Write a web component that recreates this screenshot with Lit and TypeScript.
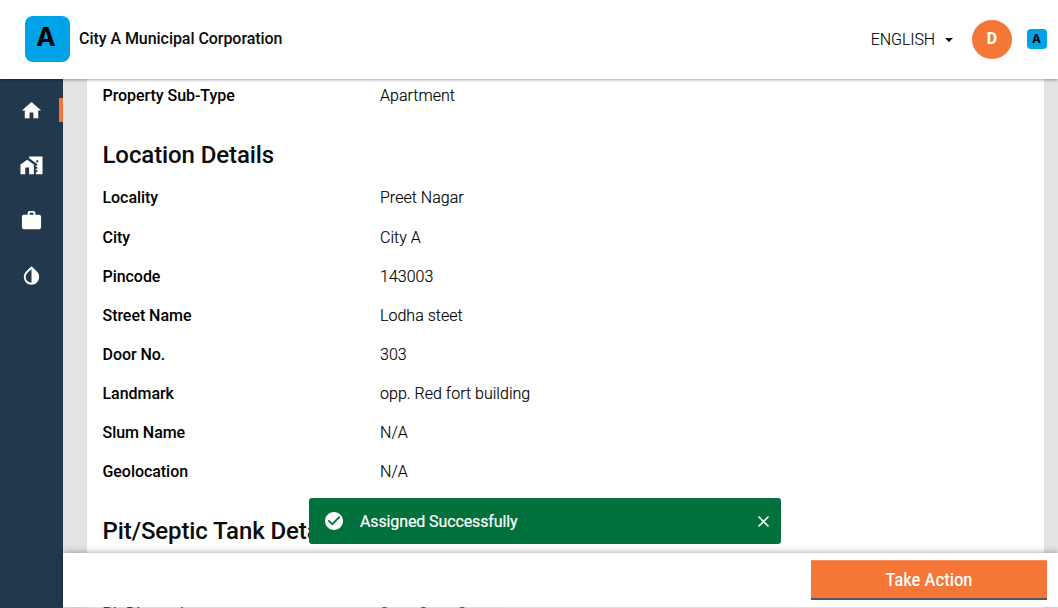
import { LitElement, html, css, svg } from "lit";
import { customElement, property } from "lit/decorators.js";

const locationRows: [string, string][] = [
  ["Locality", "Preet Nagar"],
  ["City", "City A"],
  ["Pincode", "143003"],
  ["Street Name", "Lodha steet"],
  ["Door No.", "303"],
  ["Landmark", "opp. Red fort building"],
  ["Slum Name", "N/A"],
  ["Geolocation", "N/A"],
];

const icons = {
  home: svg`<path d="M10 20v-6h4v6h5v-8h3L12 3 2 12h3v8z"/>`,
  homeWork: svg`<path d="M.5 11v10h5v-7h4v7h5V11L7.500 6z"/><path d="M9.500 2.500v2l7 5V10h1.500v2h-1.500v1.500h1.500v2h-1.500V17h1.500v2h-1.500v2h7V2.500zm9.500 6h-2v-2h2z"/>`,
  work: svg`<path d="M20 6h-4V4c0-1.110-.89-2-2-2h-4c-1.110 0-2 .89-2 2v2H4c-1.110 0-1.990.89-1.990 2L2 19c0 1.110.89 2 2 2h16c1.110 0 2-.89 2-2V8c0-1.110-.89-2-2-2zm-6 0h-4V4h4v2z"/>`,
  drop: svg`<path d="M17.660 7.930L12 2.270 6.340 7.930c-3.120 3.120-3.120 8.190 0 11.310C7.900 20.800 9.950 21.580 12 21.580s4.100-.78 5.660-2.340c3.120-3.120 3.120-8.190 0-11.310zM12 19.590c-1.600 0-3.110-.62-4.240-1.760C6.620 16.690 6 15.190 6 13.590s.62-3.110 1.760-4.240L12 5.100v14.490z"/>`,
};

@customElement("side-nav")
export class SideNav extends LitElement {
  static styles = css`
    :host { display: block; background: #22394d; }
    .item { height: 55.2px; display: flex; align-items: center; justify-content: space-between; padding-left: 20px; }
    .list { padding-top: 3.5px; }
    svg { width: 23px; height: 23px; fill: #fff; display: block; }
    .marker { width: 4px; height: 24px; background: #f47738; }
  `;
  render() {
    return html`<div class="list">
      ${[icons.home, icons.homeWork, icons.work, icons.drop].map(
        (icon, i) => html`<div class="item">
          <svg viewBox="0 0 24 24">${icon}</svg>
          ${i === 0 ? html`<span class="marker"></span>` : ""}
        </div>`
      )}
    </div>`;
  }
}

@customElement("detail-row")
export class DetailRow extends LitElement {
  @property() label = "";
  @property() value = "";
  static styles = css`
    :host { display: grid; grid-template-columns: 277.5px 1fr; line-height: 24px; height: 24px; }
    .label { font-weight: 500; letter-spacing: -.05px; }
    .value { font-weight: 300; color: #000; letter-spacing: .02px; -webkit-text-stroke: .15px #000; }
  `;
  render() {
    return html`<span class="label">${this.label}</span><span class="value">${this.value}</span>`;
  }
}

@customElement("app-root")
export class AppRoot extends LitElement {
  static styles = css`
    :host { display: grid; grid-template-rows: 79px 529px; width: 1058px; height: 608px; overflow: hidden; position: relative; font: 16px Roboto, sans-serif; color: #0b0c0c; background: #e3e3e3; }
    .top { display: flex; align-items: center; background: #fff; box-shadow: 0 1px 3px rgba(0, 0, 0, .35); z-index: 2; padding: 0 11px 1px 25px; box-sizing: border-box; }
    .logo { width: 45px; height: 46px; border-radius: 8px; background: #00a2e8; color: #000; font: 700 26px/42px Inter, sans-serif; text-align: center; padding-right: 3px; box-sizing: border-box; }
    .city { font-weight: 500; margin-left: 9px; flex: 1; letter-spacing: -.05px; line-height: 20px; padding-bottom: 1px; }
    .lang { font-weight: 300; line-height: 20px; padding-top: 1px; margin-right: 9.5px; letter-spacing: -.1px; color: #000; -webkit-text-stroke: .1px #000; }
    .caret { width: 0; height: 0; border: 4px solid transparent; border-top-color: #000; border-bottom: 0; margin: 1px 19.5px 0 0; }
    .avatar { width: 40px; height: 39px; border-radius: 50%; background: #f47738; color: #fff; font-weight: 800; line-height: 38px; text-align: center; margin-right: 15px; }
    .mini { width: 20px; height: 20px; border-radius: 4px; background: #00a2e8; color: #000; font: 700 12px/19px Inter, sans-serif; text-align: center; padding-right: 1px; box-sizing: border-box; }
    .body { display: grid; grid-template-columns: 63px 1fr; min-height: 0; }
    .main { display: grid; grid-template-rows: 474px 54px 1px; min-width: 0; }
    .scroll { padding: 0 14px 0 24px; overflow: hidden; }
    .card { background: #fff; height: 474px; padding: 5px 15.5px 0; box-sizing: border-box; color: #000; }
    h2 { font: 500 24px/28px Roboto, sans-serif; color: #0b0c0c; margin: 33px 0 17.45px; letter-spacing: -.1px; }
    .rows { display: grid; gap: 15.08px; }
    .rows + h2 { margin: 32.6px 0 0; }
    .bar { background: #fff; display: flex; justify-content: flex-end; align-items: flex-start; padding: 7px 11px 0 0; box-shadow: 0 -1px 6px rgba(0, 0, 0, .3); z-index: 2; }
    .action { width: 236px; height: 40px; box-sizing: border-box; border: 0; border-bottom: 2px solid #505a5f; background: #f47738; box-shadow: inset 0 1px #f69260; color: #fff; font: 400 19px/38px "Roboto Condensed", Roboto, sans-serif; letter-spacing: -.1px; padding: 1px 0 0; -webkit-text-stroke: .2px #fff; }
    .below { padding: 0 14px 0 24px; overflow: hidden; }
    .strip { background: #fff; height: 1px; padding: 0 15.5px; overflow: hidden; color: #000; opacity: .7; }
    .strip detail-row { margin-top: -5px; }
    .toast { position: absolute; left: 309px; top: 498px; width: 472px; height: 46px; box-sizing: border-box; background: #00703c; border-radius: 3px; color: #fff; display: flex; align-items: center; padding: 0 11px 0 16px; z-index: 3; }
    .toast span { flex: 1; margin-left: 16px; letter-spacing: -.12px; -webkit-text-stroke: .2px #fff; }
    .check { width: 18px; height: 18px; fill: #fff; margin-right: 1px; }
    .close { width: 13px; height: 13px; stroke: #fff; stroke-width: 1.6; fill: none; }
  `;
  render() {
    return html`
      <header class="top">
        <div class="logo">A</div>
        <div class="city">City A Municipal Corporation</div>
        <div class="lang">ENGLISH</div><i class="caret"></i>
        <div class="avatar">D</div>
        <div class="mini">A</div>
      </header>
      <div class="body">
        <side-nav></side-nav>
        <div class="main">
          <div class="scroll"><div class="card">
            <detail-row label="Property Sub-Type" value="Apartment"></detail-row>
            <h2>Location Details</h2>
            <div class="rows">
              ${locationRows.map(([l, v]) => html`<detail-row label=${l} value=${v}></detail-row>`)}
            </div>
            <h2>Pit/Septic Tank Details</h2>
          </div></div>
          <div class="bar"><button class="action">Take Action</button></div>
          <div class="below"><div class="strip"><detail-row label="Pit Dimension" value="2m x 2m x 3m"></detail-row></div></div>
        </div>
      </div>
      <div class="toast">
        <svg class="check" viewBox="2 2 20 20"><path d="M12 2C6.480 2 2 6.480 2 12s4.480 10 10 10 10-4.480 10-10S17.520 2 12 2zm-2 15l-5-5 1.410-1.410L10 14.170l7.590-7.590L19 8l-9 9z"/></svg>
        <span>Assigned Successfully</span>
        <svg class="close" viewBox="0 0 13 13"><path d="M1.500 1.500l10 10M11.500 1.500l-10 10"/></svg>
      </div>
    `;
  }
}
